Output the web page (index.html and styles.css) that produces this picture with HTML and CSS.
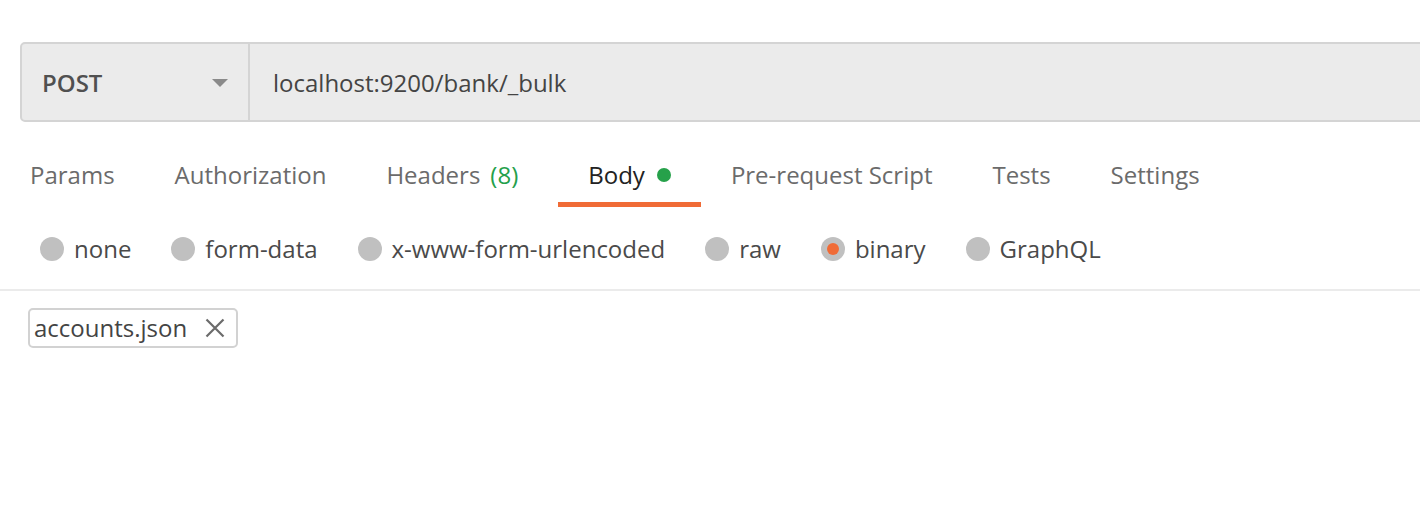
FILE: index.html
```html
<!DOCTYPE html>
<html>
<head>
<meta charset="utf-8">
<link rel="stylesheet" href="styles.css">
</head>
<body>
<div class="page">
  <div class="request-bar">
    <div class="method">
      <span class="method-name">POST</span>
      <span class="caret"></span>
    </div>
    <div class="url">localhost:9200/bank/_bulk</div>
  </div>

  <div class="tabs">
    <div class="tab">Params</div>
    <div class="tab">Authorization</div>
    <div class="tab">Headers <span class="count">(8)</span></div>
    <div class="tab active">Body <span class="dot"></span></div>
    <div class="tab">Pre-request Script</div>
    <div class="tab">Tests</div>
    <div class="tab">Settings</div>
  </div>

  <div class="body-types">
    <label class="radio"><span class="circle"></span><span class="label">none</span></label>
    <label class="radio"><span class="circle"></span><span class="label">form-data</span></label>
    <label class="radio"><span class="circle"></span><span class="label">x-www-form-urlencoded</span></label>
    <label class="radio"><span class="circle"></span><span class="label">raw</span></label>
    <label class="radio"><span class="circle selected"></span><span class="label">binary</span></label>
    <label class="radio"><span class="circle"></span><span class="label">GraphQL</span></label>
  </div>

  <div class="file-area">
    <div class="chip">
      <span class="chip-name">accounts.json</span>
      <svg class="chip-x" width="20" height="20" viewBox="0 0 20 20"><path d="M1.5 1.5 L18.5 18.5 M18.5 1.5 L1.5 18.5" stroke="#6b6b6b" stroke-width="2.2" fill="none"/></svg>
    </div>
  </div>
</div>
</body>
</html>
```

FILE: styles.css
```css
html, body {
  margin: 0;
  padding: 0;
  background: #ffffff;
}

body {
  font-family: "Open Sans", "Liberation Sans", sans-serif;
  font-size: 24px;
  color: #444444;
  overflow: hidden;
}

.page {
  width: 1420px;
  overflow: hidden;
}

.request-bar {
  margin: 42px 0 0 20px;
  width: 1440px;
  height: 76px;
  display: flex;
  background: #ebebeb;
  border: 2px solid #d4d4d4;
  border-radius: 5px;
}

.method {
  width: 228px;
  box-sizing: border-box;
  padding: 0 20px 0 20px;
  display: flex;
  align-items: center;
  justify-content: space-between;
  border-right: 2px solid #d4d4d4;
}

.method-name {
  font-weight: 600;
  color: #505050;
  line-height: 32px;
  margin-top: 2px;
}

.caret {
  width: 0;
  height: 0;
  border-left: 8px solid transparent;
  border-right: 8px solid transparent;
  border-top: 8px solid #8a8a8a;
  margin-top: 2px;
}

.url {
  display: flex;
  align-items: center;
  padding: 2px 0 0 23px;
  color: #444444;
  line-height: 32px;
}

.tabs {
  display: flex;
  margin-top: 37px;
  padding-left: 0;
}

.tab {
  padding: 0 30px 11px;
  line-height: 32px;
  color: #6b6b6b;
  border-bottom: 5px solid transparent;
  display: flex;
  align-items: center;
}

.tab .count {
  color: #24a04b;
  margin-left: 10px;
  margin-right: 10px;
}

.tab.active {
  color: #222222;
  border-bottom-color: #f06b36;
}

.dot {
  width: 14px;
  height: 14px;
  border-radius: 50%;
  background: #26a14a;
  margin-left: 12px;
}

.body-types {
  display: flex;
  align-items: center;
  margin-top: 26px;
  padding: 0 0 24px 40px;
  gap: 40px;
  border-bottom: 2px solid #ebebeb;
}

.radio {
  display: flex;
  align-items: center;
  gap: 10px;
  line-height: 32px;
  color: #4a4a4a;
}

.circle {
  width: 24px;
  height: 24px;
  border-radius: 50%;
  background: #c0c0c0;
  display: flex;
  align-items: center;
  justify-content: center;
}

.circle.selected::after {
  content: "";
  width: 12px;
  height: 12px;
  border-radius: 50%;
  background: #f06b36;
}

.file-area {
  padding: 17px 0 0 28px;
}

.chip {
  display: inline-flex;
  align-items: center;
  height: 36px;
  border: 2px solid #d2d2d2;
  border-radius: 5px;
  padding: 0 11px 0 4px;
}

.chip-name {
  color: #444444;
  line-height: 32px;
}

.chip-x {
  margin-left: 18px;
  width: 20px;
  height: 20px;
}
```
